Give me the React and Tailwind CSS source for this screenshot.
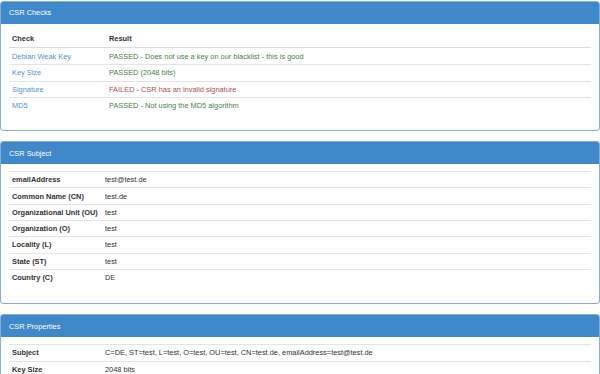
import React from 'react'

const checks = [
  { name: 'Debian Weak Key', result: 'PASSED - Does not use a key on our blacklist - this is good', ok: true },
  { name: 'Key Size', result: 'PASSED (2048 bits)', ok: true },
  { name: 'Signature', result: 'FAILED - CSR has an invalid signature', ok: false },
  { name: 'MD5', result: 'PASSED - Not using the MD5 algorithm', ok: true },
]

const subject = [
  ['emailAddress', 'test@test.de'],
  ['Common Name (CN)', 'test.de'],
  ['Organizational Unit (OU)', 'test'],
  ['Organization (O)', 'test'],
  ['Locality (L)', 'test'],
  ['State (ST)', 'test'],
  ['Country (C)', 'DE'],
]

const properties = [
  ['Subject', 'C=DE, ST=test, L=test, O=test, OU=test, CN=test.de, emailAddress=test@test.de'],
  ['Key Size', '2048 bits'],
]

function Panel({ title, children, bottom = 'pb-[17px]' }) {
  return (
    <div className="mb-[10px] rounded-[3px] border border-[#86afd6] bg-white overflow-hidden">
      <div className="h-[22px] bg-[#3f88c9] px-[8px] flex items-center text-[7.4px] text-white">
        {title}
      </div>
      <div className={`px-[8px] pt-[7px] ${bottom}`}>{children}</div>
    </div>
  )
}

function KeyValueTable({ rows }) {
  return (
    <div className="flex flex-col">
      {rows.map(([label, value]) => (
        <div
          key={label}
          className="flex items-center h-[16.3px] border-t border-[#e4e4e4] px-[3px] text-[7.4px] text-[#333]"
        >
          <div className="w-[93px] font-bold shrink-0">{label}</div>
          <div>{value}</div>
        </div>
      ))}
    </div>
  )
}

export default function App() {
  return (
    <div
      className="w-[600px] h-[374px] overflow-hidden bg-white pt-[1px]"
      style={{ fontFamily: '"Liberation Sans", Arial, sans-serif' }}
    >
      <Panel title="CSR Checks">
        <div className="flex flex-col">
          <div className="flex items-center h-[17px] border-b border-[#dddddd] px-[3px] text-[7.4px] font-bold text-[#333]">
            <div className="w-[97px] shrink-0">Check</div>
            <div>Result</div>
          </div>
          {checks.map((c, i) => (
            <div
              key={c.name}
              className={`flex items-center h-[16.3px] px-[3px] text-[7.4px] ${i > 0 ? 'border-t border-[#e4e4e4]' : ''}`}
            >
              <div className="w-[97px] shrink-0 text-[#4f93cf]">{c.name}</div>
              <div className={c.ok ? 'text-[#467f47]' : 'text-[#b0504f]'}>{c.result}</div>
            </div>
          ))}
        </div>
      </Panel>

      <Panel title="CSR Subject" bottom="pb-[18px]">
        <KeyValueTable rows={subject} />
      </Panel>

      <Panel title="CSR Properties">
        <KeyValueTable rows={properties} />
      </Panel>
    </div>
  )
}
